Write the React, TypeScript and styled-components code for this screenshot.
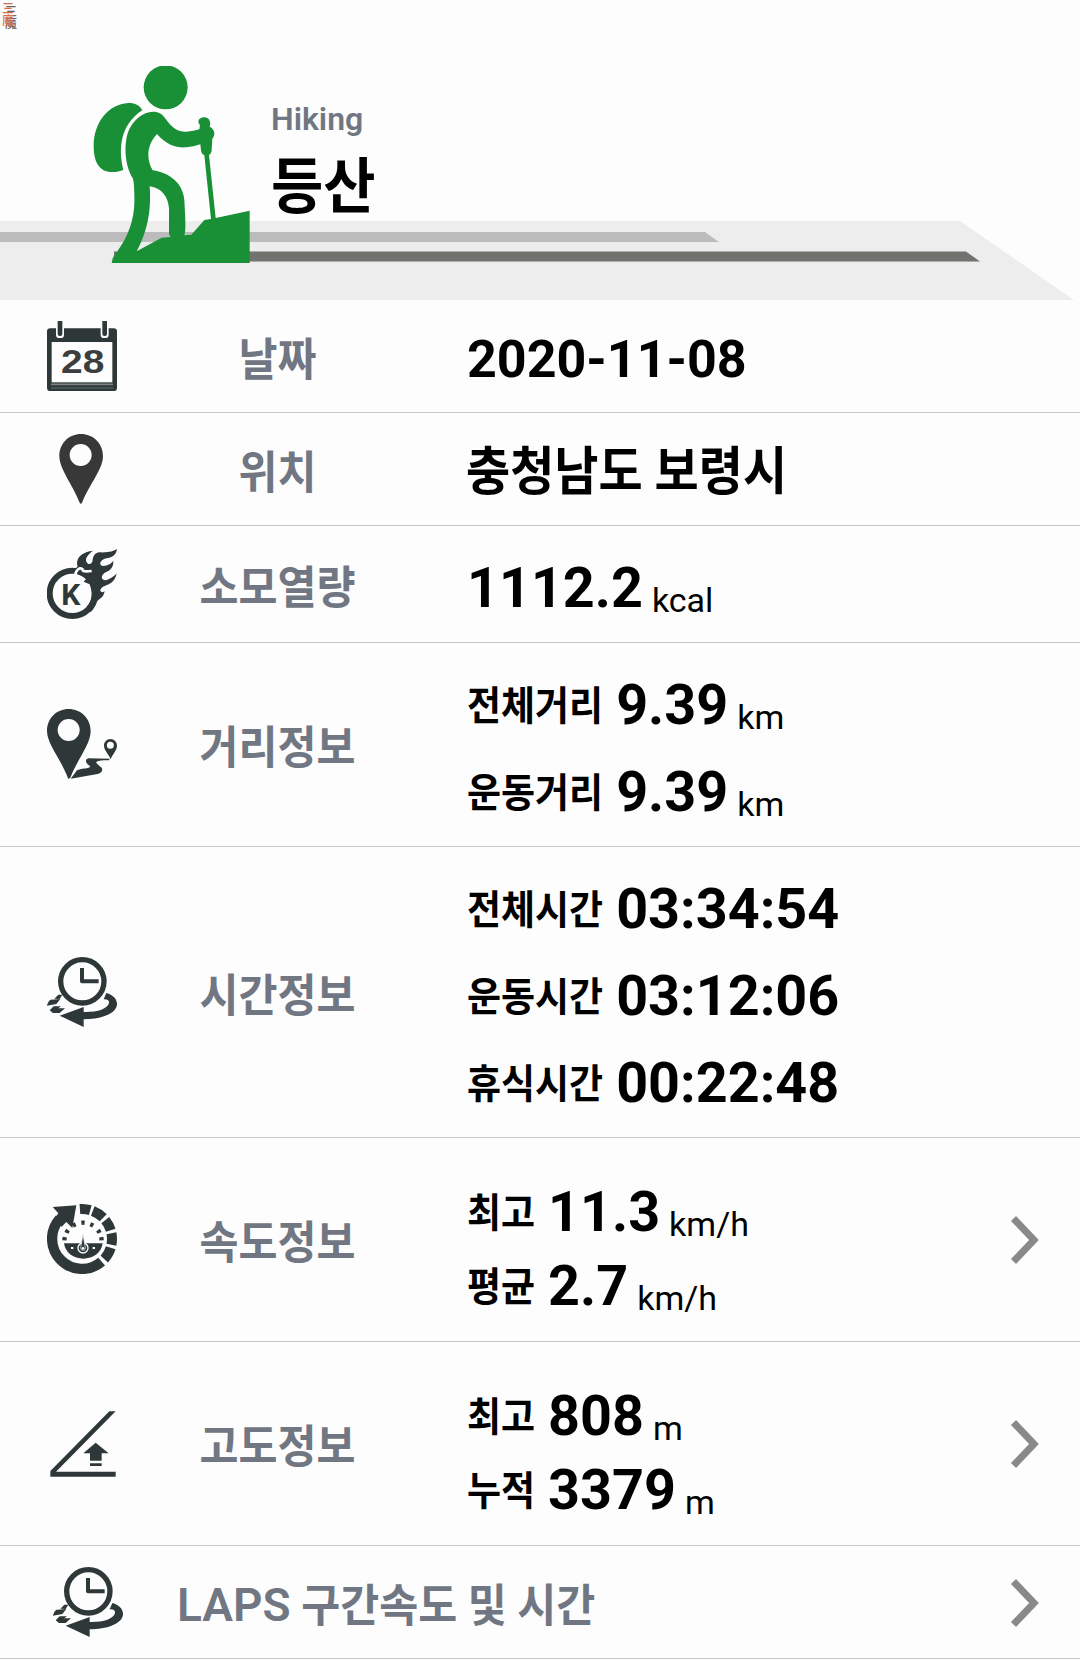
import React from "react";
import styled, { createGlobalStyle } from "styled-components";

const INK = "#2f3838";
const PAPER = "#fdfdfd";

const GlobalStyle = createGlobalStyle`
  * { box-sizing: border-box; }
  body {
    margin: 0;
    background: ${PAPER};
    font-family: Roboto, "Noto Sans CJK KR", sans-serif;
  }
`;

const Page = styled.main`
  width: 1080px;
  height: 1659px;
  overflow: hidden;
  background: ${PAPER};
  color: #000;
`;

const Header = styled.header`
  position: relative;
  display: flex;
  align-items: flex-start;
  height: 300px;
  padding: 66px 0 0 93px;
`;

const Stripes = styled.svg`
  position: absolute;
  left: 0;
  top: 221px;
`;

const Stamp = styled.div`
  position: absolute;
  left: 2px;
  top: 2px;
  width: 13px;
  font: 500 12px/12px "Noto Sans CJK TC", sans-serif;
  color: #d0714f;
  text-shadow: 3px 3px 0 #6f625e;
`;

const HikerArt = styled.svg`
  position: relative;
  flex: none;
  width: 157px;
  height: 197px;
`;

const Titles = styled.div`
  position: relative;
  margin: 34px 0 0 21px;
`;

const TitleSmall = styled.div`
  font-size: 32px;
  line-height: 38px;
  font-weight: 600;
  color: #717782;
`;

const Title = styled.h1`
  margin: 17px 0 0;
  font-size: 56.8px;
  line-height: 66px;
  font-weight: 700;
  transform: scaleY(1.07);
`;

const Row = styled.section<{ $height: number }>`
  display: grid;
  grid-template-columns: 164px 227px 1fr 70px;
  align-items: center;
  height: ${(p) => p.$height}px;
  border-bottom: 1px solid #c6c6c6;
`;

const LapsRow = styled(Row)`
  grid-template-columns: 177px 1fr 70px;
`;

const IconCell = styled.div`
  display: flex;
  justify-content: center;
  padding-bottom: 1px;
`;

const LapsIconCell = styled(IconCell)`
  padding-right: 1px;
`;

const Glyph = styled.svg`
  display: block;
  width: 70px;
  height: 70px;
`;

const Label = styled.div`
  padding-top: 9px;
  font-size: 42.4px;
  line-height: 54px;
  font-weight: 700;
  text-align: center;
  color: #717782;
  white-space: pre;
`;

const LapsLabel = styled(Label)`
  padding-top: 7px;
  text-align: left;
`;

const Tall = styled.span`
  display: inline-block;
  transform: scaleY(1.08);
`;

const Latin = styled.span`
  font-size: 46px;
  font-weight: 600;
`;

const Values = styled.div<{ $gap?: number; $drop?: number }>`
  display: flex;
  flex-direction: column;
  gap: ${(p) => p.$gap ?? 0}px;
  padding: ${(p) => p.$drop ?? 7}px 0 0 76px;
`;

const PlaceValues = styled(Values)`
  padding: 8px 0 0 75px;
`;

const PlainValue = styled.div<{ $size: number }>`
  font-size: ${(p) => p.$size}px;
  line-height: 60px;
  font-weight: 700;
`;

const Measure = styled.div`
  display: flex;
  align-items: flex-end;
  height: 66px;
`;

const Name = styled.span`
  margin: 0 13px 9px 0;
  font-size: 37px;
  line-height: 44px;
  font-weight: 700;
  transform: scaleY(1.08);
`;

const Amount = styled.span`
  font-size: 55.7px;
  line-height: 66px;
  font-weight: 700;
`;

const Unit = styled.span`
  margin: 0 0 1px 9px;
  font-size: 34px;
  line-height: 40px;
`;

const ArrowCell = styled.div`
  display: flex;
  padding-top: 1px;
`;

type Reading = { name?: string; amount: string; unit?: string };

function Readings({ items, gap, drop }: { items: Reading[]; gap?: number; drop?: number }) {
  return (
    <Values $gap={gap} $drop={drop}>
      {items.map((it) => (
        <Measure key={it.name ?? it.amount}>
          {it.name && <Name>{it.name}</Name>}
          <Amount>{it.amount}</Amount>
          {it.unit && <Unit>{it.unit}</Unit>}
        </Measure>
      ))}
    </Values>
  );
}

function Hiker() {
  return (
    <HikerArt viewBox="280 198 471 591" preserveAspectRatio="none" fill="#199035">
      <circle cx="498" cy="262" r="66" />
      <path d="M428 331 C420 314 402 309 386 309 C325 312 282 370 282 437 C282 480 295 516 338 516 C352 516 362 514 371 509 C356 450 360 375 428 331 Z" />
      <path d="M400 536 C376 500 372 440 384 400 C396 362 430 335 460 335 C478 335 488 342 496 354 C516 384 536 396 560 395 C575 394 588 391 599 388 L601 376 C590 362 600 352 614 352 C628 352 635 366 630 380 C646 388 648 404 638 416 L636 450 C636 458 632 463 628 465 L648 654 L750 632 V789 H336 L339 775 L352 755 C385 712 407 655 404 590 C404 570 403 550 400 536 Z
        M472 402 C500 434 528 444 560 442 C575 441 588 437 602 433 L604 450 C604 458 609 464 614 466 L634 657 L614 660 L575 704 L554 706 C560 690 556 640 554 600 C550 550 510 518 459 511 C440 480 440 436 472 402 Z
        M450 559 C486 564 505 590 508 625 V698 C508 704 510 708 514 711 L486 713 L411 754 C440 700 456 640 450 559 Z" fillRule="evenodd" />
    </HikerArt>
  );
}

function CalendarIcon() {
  return (
    <Glyph viewBox="0 0 210 210">
      <rect y="22" width="210" height="188" rx="10" fill={INK} />
      <rect x="14" y="63" width="182" height="121" fill={PAPER} />
      <path d="M12 190 H198" stroke="#7b8080" strokeWidth="5" />
      <path d="M12 201 H198" stroke="#697070" strokeWidth="3" />
      <rect x="27" y="-10" width="24" height="61" rx="10" fill={PAPER} />
      <rect x="161" y="-10" width="24" height="61" rx="10" fill={PAPER} />
      <rect x="32" y="-8" width="14" height="53" rx="6" fill={INK} />
      <rect x="166" y="-8" width="14" height="53" rx="6" fill={INK} />
      <text x="42" y="156" fontFamily="Liberation Sans, sans-serif" fontWeight="700" fontSize="102" textLength="130" lengthAdjust="spacingAndGlyphs" fill="#3b3e3e">28</text>
    </Glyph>
  );
}

function PinIcon() {
  return (
    <Glyph viewBox="0 0 210 210">
      <path d="M102 0 C138 0 168 28 168 66 C168 105 128 150 105 206 L102 210 L98 206 C76 150 37 105 37 66 C37 28 66 0 102 0 Z M101 30 A33 33 0 1 0 101 96 A33 33 0 1 0 101 30 Z" fill="#383838" fillRule="evenodd" />
    </Glyph>
  );
}

function CalorieIcon() {
  return (
    <Glyph viewBox="0 0 210 210">
      <circle cx="76" cy="133" r="68" fill="none" stroke={INK} strokeWidth="18" />
      <path d="M92 52 C84 24 110 8 138 5 C124 16 114 26 118 38 C124 48 132 46 136 38 C138 26 140 12 156 10 C168 10 190 12 210 0 C208 18 194 26 178 28 C158 32 154 50 168 51 C184 50 194 42 199 35 C200 54 190 64 176 70 C162 78 160 92 174 94 C188 92 202 82 209 73 C206 92 194 104 178 109 C164 114 160 120 160 126 C164 131 170 130 173 127 C168 150 156 148 150 158 C146 170 140 180 130 190 L120 172 C136 156 138 132 128 106 L110 98 L120 86 C104 84 100 72 98 62 L86 76 L76 70 Z" fill={INK} />
      <path d="M84 78 C88 62 98 54 106 60 C106 68 116 68 134 66" fill="none" stroke={PAPER} strokeWidth="8" />
      <text x="43" y="168" fontFamily="Roboto, sans-serif" fontWeight="700" fontSize="90" fill={INK}>K</text>
    </Glyph>
  );
}

function RouteIcon() {
  return (
    <Glyph viewBox="0 0 210 210" fill={INK}>
      <path d="M65 0 C101 0 131 28 131 66 C131 105 92 150 70 206 L64 210 C42 150 0 105 0 66 C0 28 29 0 65 0 Z M65 30 A33 33 0 1 0 65 96 A33 33 0 1 0 65 30 Z" fillRule="evenodd" />
      <path d="M190 90 C202 90 210 99 210 110 C210 124 196 136 191 151 C186 136 171 124 171 110 C171 99 179 90 190 90 Z M190 98 A10.500 10.500 0 1 0 190 119 A10.500 10.500 0 1 0 190 98 Z" fillRule="evenodd" />
      <path d="M188 149 L124 148 C112 152 116 164 130 172 C126 180 114 178 102 180 L90 184 L71 209 L152 195 C168 191 169 178 160 173 L148 162 C146 156 160 154 186 154 Z" />
    </Glyph>
  );
}

function ClockIcon() {
  return (
    <Glyph viewBox="0 0 210 210" fill={INK}>
      <circle cx="106" cy="73" r="65" fill="none" stroke={INK} strokeWidth="16" />
      <path d="M105 33 V73 H155" fill="none" stroke={INK} strokeWidth="12" strokeLinejoin="round" />
      <path d="M38 176 L110 150 V165 C150 166 182 156 186 138 C187 130 180 126 170 127 L178 108 C200 114 211 128 210 143 C206 172 160 186 110 187 V210 Z" />
      <path d="M22 125 L34 113 H46 L38 126 Z M0 146 C2 136 8 128 12 128 L40 126 L28 141 Z M8 160 L20 148 H42 L34 154 L54 154 L38 168 H18 Z" />
    </Glyph>
  );
}

function arc(cx: number, cy: number, r: number, from: number, to: number) {
  const pt = (deg: number) => {
    const a = (deg * Math.PI) / 180;
    return `${(cx + r * Math.cos(a)).toFixed(1)} ${(cy + r * Math.sin(a)).toFixed(1)}`;
  };
  return `M${pt(from)} A${r} ${r} 0 ${to - from > 180 ? 1 : 0} 1 ${pt(to)}`;
}

const SEGMENTS = [
  [-94, -74],
  [-69, -45],
  [-39, -17],
  [-11, 11],
  [17, 42],
];
const TICKS = [-172, -148, -118, -90, -62, -32, -8];

function SpeedIcon() {
  return (
    <Glyph viewBox="0 0 210 210" fill={INK}>
      <path d={arc(105, 105, 90, 49, 222)} fill="none" stroke={INK} strokeWidth="31" />
      {SEGMENTS.map(([a, b]) => (
        <path key={a} d={arc(105, 105, 90, a, b)} fill="none" stroke={INK} strokeWidth="30" />
      ))}
      <path d="M17 9 L88 4 L76 72 L58 54 L44 68 L22 44 L34 28 Z" />
      {TICKS.map((t) => (
        <path key={t} d={arc(108, 112, 56, t - 5, t + 5)} fill="none" stroke={INK} strokeWidth="13" />
      ))}
      <path d="M51 118 H167 C164 146 138 164 109 164 C80 164 54 146 51 118 Z" />
      <circle cx="108" cy="132" r="15" fill={INK} stroke={PAPER} strokeWidth="4" />
      <path d="M108 90 L115 132 A7 7 0 0 1 101 132 Z" stroke={PAPER} strokeWidth="2" />
      <circle cx="108" cy="133" r="4" fill={PAPER} />
      <path d="M72 132 h7 M137 132 h7" stroke={PAPER} strokeWidth="6" />
    </Glyph>
  );
}

function SlopeIcon() {
  return (
    <Glyph viewBox="0 -3 210 210" fill={INK}>
      <path d="M10 203 V186 L187 7 H206 L27 188 H206 V203 Z" />
      <path d="M146 101 L185 133 H164 V155 H129 V133 H109 Z M129 163 H164 V171 H129 Z" />
    </Glyph>
  );
}

function Chevron() {
  return (
    <ArrowCell>
      <svg width="30" height="50" viewBox="0 0 30 50">
        <path d="M3.500 3.500 L24 25 L3.500 46.500" fill="none" stroke="#8a8889" strokeWidth="7" />
      </svg>
    </ArrowCell>
  );
}

export default function App() {
  return (
    <>
      <GlobalStyle />
      <Page>
        <Header>
          <Stripes width="1080" height="79" viewBox="0 0 1080 79">
            <path d="M0 0 H960 L1074 79 H0 Z" fill="#ededed" />
            <path d="M0 11 H705 L719 21 H0 Z" fill="#bcbcbc" />
            <path d="M114 30.500 H966 L980 40.500 H114 Z" fill="#70736e" />
          </Stripes>
          <Stamp>三魔</Stamp>
          <Hiker />
          <Titles>
            <TitleSmall>Hiking</TitleSmall>
            <Title>등산</Title>
          </Titles>
        </Header>

        <Row $height={113}>
          <IconCell><CalendarIcon /></IconCell>
          <Label><Tall>날짜</Tall></Label>
          <Values><PlainValue $size={52}>2020-11-08</PlainValue></Values>
        </Row>
        <Row $height={113}>
          <IconCell><PinIcon /></IconCell>
          <Label><Tall>위치</Tall></Label>
          <PlaceValues><PlainValue $size={48}><Tall>충청남도 보령시</Tall></PlainValue></PlaceValues>
        </Row>
        <Row $height={117}>
          <IconCell><CalorieIcon /></IconCell>
          <Label><Tall>소모열량</Tall></Label>
          <Readings items={[{ amount: "1112.2", unit: "kcal" }]} />
        </Row>
        <Row $height={204}>
          <IconCell><RouteIcon /></IconCell>
          <Label><Tall>거리정보</Tall></Label>
          <Readings
            gap={21}
            items={[
              { name: "전체거리", amount: "9.39", unit: "km" },
              { name: "운동거리", amount: "9.39", unit: "km" },
            ]}
          />
        </Row>
        <Row $height={291}>
          <IconCell><ClockIcon /></IconCell>
          <Label><Tall>시간정보</Tall></Label>
          <Readings
            gap={21}
            items={[
              { name: "전체시간", amount: "03:34:54" },
              { name: "운동시간", amount: "03:12:06" },
              { name: "휴식시간", amount: "00:22:48" },
            ]}
          />
        </Row>
        <Row $height={204}>
          <IconCell><SpeedIcon /></IconCell>
          <Label><Tall>속도정보</Tall></Label>
          <Readings
            gap={8}
            drop={19}
            items={[
              { name: "최고", amount: "11.3", unit: "km/h" },
              { name: "평균", amount: "2.7", unit: "km/h" },
            ]}
          />
          <Chevron />
        </Row>
        <Row $height={204}>
          <IconCell><SlopeIcon /></IconCell>
          <Label><Tall>고도정보</Tall></Label>
          <Readings
            gap={8}
            drop={19}
            items={[
              { name: "최고", amount: "808", unit: "m" },
              { name: "누적", amount: "3379", unit: "m" },
            ]}
          />
          <Chevron />
        </Row>
        <LapsRow $height={113}>
          <LapsIconCell><ClockIcon /></LapsIconCell>
          <LapsLabel><Latin>LAPS</Latin> <Tall>구간속도 및 시간</Tall></LapsLabel>
          <Chevron />
        </LapsRow>
      </Page>
    </>
  );
}
